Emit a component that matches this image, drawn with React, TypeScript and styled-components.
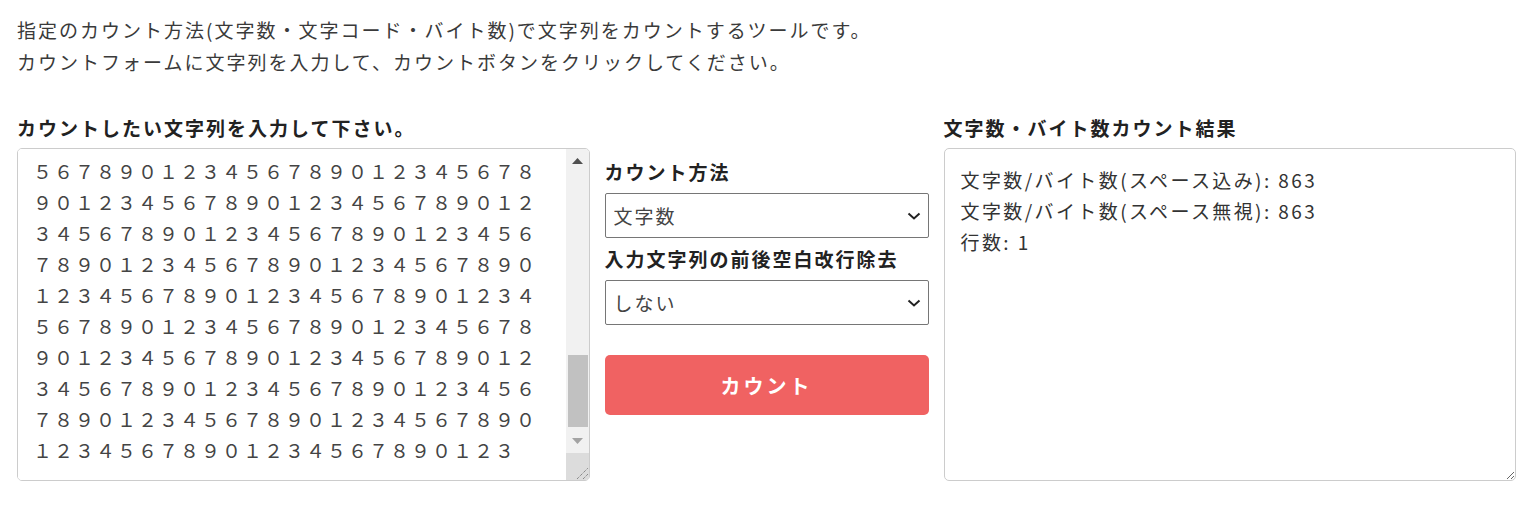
import React, { useEffect, useRef } from 'react';
import styled, { createGlobalStyle } from 'styled-components';

const GlobalStyle = createGlobalStyle`
  body {
    margin: 0;
    background: #fff;
    font-family: "Noto Sans CJK JP", "Noto Sans", sans-serif;
    color: #333;
  }
`;

const Page = styled.div`
  padding: 14px 17px 0;
  font-size: 19px;
  letter-spacing: 2px;
`;

const Intro = styled.p`
  margin: 0 0 34px;
  line-height: 32px;
  color: #3a3a3a;
`;

const Grid = styled.div`
  display: grid;
  grid-template-columns: 1fr 324px 1fr;
  grid-template-rows: auto 333px;
  column-gap: 15px;
  row-gap: 4px;
`;

const Heading = styled.h2<{ $col: number }>`
  grid-column: ${(p) => p.$col};
  grid-row: 1;
  margin: 0;
  font-size: 19px;
  font-weight: 700;
  line-height: 32px;
  color: #222;
`;

const InputBox = styled.div`
  grid-column: 1;
  grid-row: 2;
  display: flex;
  border: 1px solid #ccc;
  border-radius: 5px;
  overflow: hidden;
`;

const InputArea = styled.textarea`
  flex: 1;
  min-width: 0;
  margin: 0;
  padding: 15px 12px 15px 15px;
  border: 0;
  font-family: inherit;
  font-size: 19px;
  letter-spacing: 2px;
  line-height: 31px;
  color: #444;
  resize: none;
  overflow: hidden;
  outline: none;
  caret-color: #000;
`;

const ScrollBar = styled.div`
  width: 23px;
  display: flex;
  flex-direction: column;
  background: #f1f1f1;
`;

const ArrowButton = styled.div`
  height: 24px;
  display: flex;
  align-items: center;
  justify-content: center;
`;

const Track = styled.div`
  flex: 1;
  display: flex;
  flex-direction: column;
  justify-content: flex-end;
  padding-bottom: 2px;
`;

const Thumb = styled.div`
  height: 72px;
  margin: 0 1px 0 2px;
  background: #c1c1c1;
`;

const Resizer = styled.div`
  height: 27px;
  background: #dcdcdc;
  display: flex;
  align-items: flex-end;
  justify-content: flex-end;
`;

const Controls = styled.div`
  grid-column: 2;
  grid-row: 2;
  display: flex;
  flex-direction: column;
  padding-top: 8px;
`;

const Label = styled.label`
  font-weight: 700;
  line-height: 32px;
  color: #222;
  margin-bottom: 5px;
`;

const SelectWrap = styled.div`
  position: relative;
  margin-bottom: 5px;
`;

const Select = styled.select`
  appearance: none;
  box-sizing: border-box;
  width: 100%;
  height: 45px;
  padding: 0 30px 0 8px;
  border: 1px solid #767676;
  border-radius: 2px;
  background: #fff;
  font-family: inherit;
  font-size: 19px;
  letter-spacing: 2px;
  color: #444;
`;

const Chevron = styled.svg`
  position: absolute;
  right: 8px;
  top: 50%;
  width: 14px;
  height: 8px;
  margin-top: -4px;
  pointer-events: none;
`;

const CountButton = styled.button`
  margin-top: 25px;
  height: 60px;
  border: 0;
  border-radius: 5px;
  background: #f06262;
  color: #fff;
  font-family: inherit;
  font-size: 20px;
  font-weight: 700;
  letter-spacing: 3px;
  cursor: pointer;
`;

const ResultArea = styled.textarea`
  grid-column: 3;
  grid-row: 2;
  box-sizing: border-box;
  width: 100%;
  height: 100%;
  margin: 0;
  padding: 15px 16px;
  border: 1px solid #ccc;
  border-radius: 5px;
  font-family: inherit;
  font-size: 19px;
  letter-spacing: 2.4px;
  line-height: 31px;
  color: #333;
  resize: both;
  outline: none;
`;

const digits = '１２３４５６７８９０'.repeat(86) + '１２３';

const results = [
  '文字数/バイト数(スペース込み): 863',
  '文字数/バイト数(スペース無視): 863',
  '行数: 1',
].join('\n');

const SelectBox: React.FC<{ options: string[] }> = ({ options }) => (
  <SelectWrap>
    <Select defaultValue={options[0]}>
      {options.map((o) => (
        <option key={o}>{o}</option>
      ))}
    </Select>
    <Chevron viewBox="0 0 14 8">
      <path d="M1.5 1.5 L7 6.5 L12.5 1.5" fill="none" stroke="#222" strokeWidth="2" />
    </Chevron>
  </SelectWrap>
);

export default function App() {
  const inputRef = useRef<HTMLTextAreaElement>(null);

  useEffect(() => {
    const el = inputRef.current;
    if (!el) return;
    el.focus();
    el.setSelectionRange(el.value.length, el.value.length);
    el.scrollTop = el.scrollHeight;
  }, []);

  return (
    <>
      <GlobalStyle />
      <Page>
        <Intro>
          指定のカウント方法(文字数・文字コード・バイト数)で文字列をカウントするツールです。
          <br />
          カウントフォームに文字列を入力して、カウントボタンをクリックしてください。
        </Intro>
        <Grid>
          <Heading $col={1}>カウントしたい文字列を入力して下さい。</Heading>
          <Heading $col={3}>文字数・バイト数カウント結果</Heading>
          <InputBox>
            <InputArea ref={inputRef} defaultValue={digits} spellCheck={false} />
            <ScrollBar>
              <ArrowButton>
                <svg width="11" height="6" viewBox="0 0 11 6">
                  <polygon points="0,6 5.5,0 11,6" fill="#505050" />
                </svg>
              </ArrowButton>
              <Track>
                <Thumb />
              </Track>
              <ArrowButton>
                <svg width="11" height="6" viewBox="0 0 11 6">
                  <polygon points="0,0 5.5,6 11,0" fill="#a3a3a3" />
                </svg>
              </ArrowButton>
              <Resizer>
                <svg width="14" height="14" viewBox="0 0 14 14">
                  <path d="M2 13 L13 2 M8 13 L13 8" stroke="#666" strokeWidth="1" strokeDasharray="1 1" />
                </svg>
              </Resizer>
            </ScrollBar>
          </InputBox>
          <Controls>
            <Label>カウント方法</Label>
            <SelectBox options={['文字数', '文字コード', 'バイト数']} />
            <Label>入力文字列の前後空白改行除去</Label>
            <SelectBox options={['しない', 'する']} />
            <CountButton>カウント</CountButton>
          </Controls>
          <ResultArea readOnly value={results} />
        </Grid>
      </Page>
    </>
  );
}
